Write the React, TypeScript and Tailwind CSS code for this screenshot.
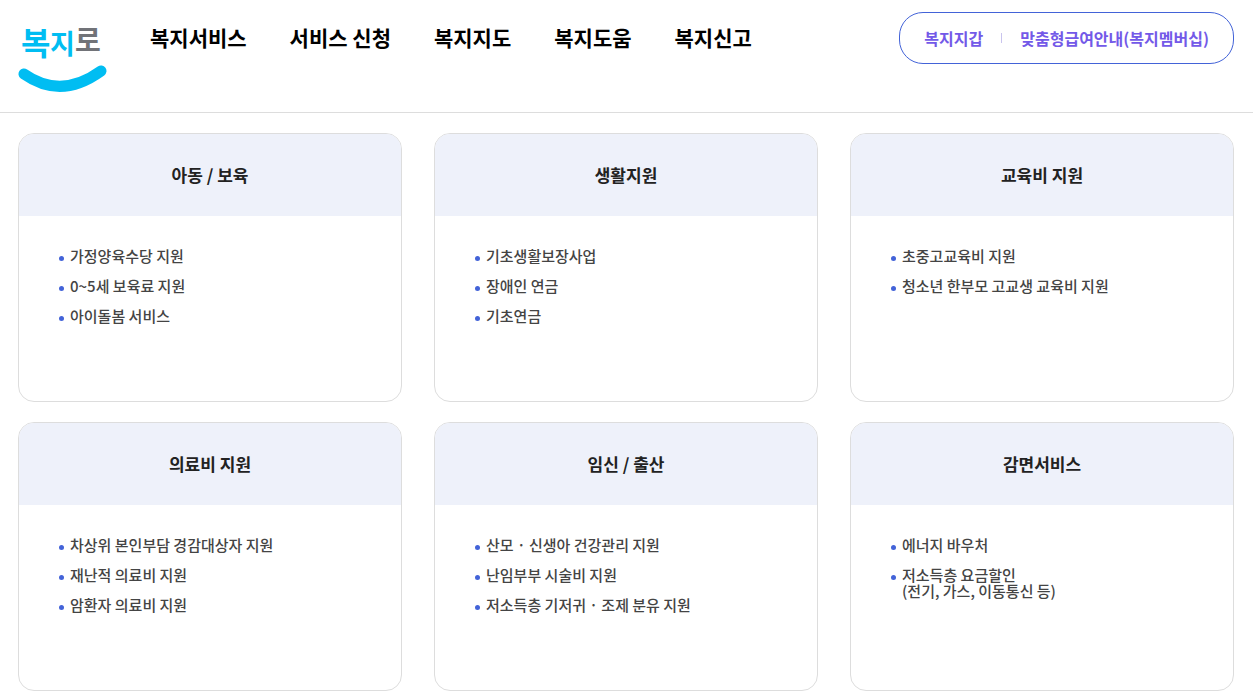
const NAV_ITEMS = ['복지서비스', '서비스 신청', '복지지도', '복지도움', '복지신고'];

interface ServiceGroup {
  title: string;
  items: string[];
}

const SERVICE_GROUPS: ServiceGroup[] = [
  {
    title: '아동 / 보육',
    items: ['가정양육수당 지원', '0~5세 보육료 지원', '아이돌봄 서비스'],
  },
  {
    title: '생활지원',
    items: ['기초생활보장사업', '장애인 연금', '기초연금'],
  },
  {
    title: '교육비 지원',
    items: ['초중고교육비 지원', '청소년 한부모 고교생 교육비 지원'],
  },
  {
    title: '의료비 지원',
    items: ['차상위 본인부담 경감대상자 지원', '재난적 의료비 지원', '암환자 의료비 지원'],
  },
  {
    title: '임신 / 출산',
    items: ['산모 · 신생아 건강관리 지원', '난임부부 시술비 지원', '저소득층 기저귀 · 조제 분유 지원'],
  },
  {
    title: '감면서비스',
    items: ['에너지 바우처', '저소득층 요금할인\n(전기, 가스, 이동통신 등)'],
  },
];

function Logo() {
  return (
    <svg viewBox="0 0 90 82" className="h-[82px] w-[90px]" role="img" aria-label="복지로">
      <g fontWeight="700" fill="#00bdf2">
        <text x="3" y="43" fontSize="32">복</text>
        <text x="32" y="42" fontSize="27">지</text>
        <text x="57" y="39" fontSize="28" fill="#717378">로</text>
      </g>
      {/* smile */}
      <path
        d="M6 62 Q43 88 83 59"
        fill="none"
        stroke="#00bdf2"
        strokeWidth="11"
        strokeLinecap="round"
      />
    </svg>
  );
}

function Header() {
  return (
    <header className="border-b border-[#dddddd]">
      <div className="flex items-start pt-3 pr-[19px] pb-[18px] pl-[18px]">
        <a href="#" className="shrink-0">
          <Logo />
        </a>
        <nav className="ml-[42px] pt-[9px]">
          <ul className="flex gap-[43px]">
            {NAV_ITEMS.map((item) => (
              <li key={item}>
                <a href="#" className="block text-[21px] leading-8 font-bold whitespace-nowrap text-black">
                  {item}
                </a>
              </li>
            ))}
          </ul>
        </nav>
        <div className="ml-auto flex h-[52px] shrink-0 items-center rounded-3xl border border-[#4363d8] px-6 text-base font-bold whitespace-nowrap text-[#7359e8]">
          <a href="#">복지지갑</a>
          <span className="mx-[18px] h-2.5 w-px bg-[#c9c4ee]" aria-hidden />
          <a href="#">맞춤형급여안내(복지멤버십)</a>
        </div>
      </div>
    </header>
  );
}

function ServiceCard({ title, items }: ServiceGroup) {
  return (
    <section className="min-h-[269px] rounded-2xl border border-[#dddddd]">
      <h2 className="rounded-t-[15px] bg-[#eef1fa] py-[29px] text-center text-[17px] leading-6 font-bold text-[#222222]">
        {title}
      </h2>
      <ul className="flex flex-col gap-3.5 px-10 pt-8">
        {items.map((item) => (
          <li key={item} className="flex gap-1.5">
            <span className="mt-2 size-[5px] shrink-0 rounded-full bg-[#4363d8]" aria-hidden />
            <a href="#" className="text-[15px] leading-4 font-medium whitespace-pre-line text-[#444444]">
              {item}
            </a>
          </li>
        ))}
      </ul>
    </section>
  );
}

export default function App() {
  return (
    <div className="min-h-screen bg-white font-['Noto_Sans_CJK_KR',sans-serif]">
      <Header />
      <main className="grid grid-cols-3 gap-x-8 gap-y-5 pt-5 pr-[19px] pb-2 pl-[18px]">
        {SERVICE_GROUPS.map((group) => (
          <ServiceCard key={group.title} {...group} />
        ))}
      </main>
    </div>
  );
}
